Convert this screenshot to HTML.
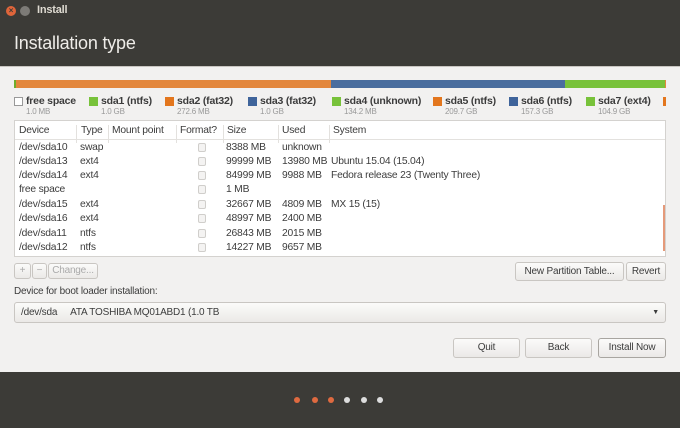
<!DOCTYPE html>
<html><head><meta charset="utf-8"><style>
*{margin:0;padding:0;box-sizing:border-box}
body{width:680px;height:428px;overflow:hidden;background:#f2f1f0;font-family:"Liberation Sans",sans-serif;font-size:10px;color:#3c3c3c;position:relative;letter-spacing:-0.2px}
.a{position:absolute}
.top{left:0;top:0;width:680px;height:66px;background:#3c3b37}
.bot{left:0;top:372px;width:680px;height:56px;background:#3c3b37}
.leg span{position:absolute}
.sq{width:9px;height:9px;top:97px}
.ln{top:95px;font-weight:bold;font-size:10.5px;color:#3c3c3c}
.sz{top:107px;font-size:8px;color:#999}
.tbl{left:14px;top:120px;width:652px;height:137px;background:#fff;border:1px solid #d4d2cf;font-size:10.3px}
.hd{left:0;top:0;width:650px;height:19px;border-bottom:1px solid #e3e1de}
.hd span{position:absolute;top:4px}
.sep{position:absolute;top:0;width:1px;height:18px;background:#e3e1de}
.r span{position:absolute}
.cb{width:8px;height:9px;border:1px solid #d0cecb;border-radius:2px;background:#f4f3f2}
.btn{position:absolute;border:1px solid #c9c6c2;border-radius:3px;background:linear-gradient(#fbfbfa,#ebe9e7);text-align:center;color:#3c3c3c}
.dot{position:absolute;top:397px;width:6px;height:6px;border-radius:50%}
</style></head><body>
<div class="a top"></div>
<div class="a" style="left:6px;top:6px;width:10px;height:10px;border-radius:50%;background:#e0653a;color:#3c3b37;font-size:8px;line-height:10px;text-align:center;font-weight:bold">×</div>
<div class="a" style="left:20px;top:6px;width:10px;height:10px;border-radius:50%;background:#7d7b77"></div>
<div class="a" style="left:37px;top:4px;color:#dfdbd2;font-weight:bold;font-size:11px">Install</div>
<div class="a" style="left:14px;top:33px;color:#eeece8;font-size:18px">Installation type</div>
<div class="a" style="left:0;top:66px;width:680px;height:1px;background:#c8c5c1"></div>

<div class="a" style="left:14px;top:80px;width:652px;height:8px;background:#e3873d"></div>
<div class="a" style="left:14px;top:80px;width:2px;height:8px;background:#6fae2c"></div>
<div class="a" style="left:331px;top:80px;width:234px;height:8px;background:#4a6d9e"></div>
<div class="a" style="left:565px;top:80px;width:100px;height:8px;background:#78c23a"></div>

<div class="leg">
<span class="sq" style="left:14px;border:1px solid #999;background:#fff"></span><span class="ln" style="left:26px">free space</span><span class="sz" style="left:26px">1.0 MB</span>
<span class="sq" style="left:89px;background:#78c23a"></span><span class="ln" style="left:101px">sda1 (ntfs)</span><span class="sz" style="left:101px">1.0 GB</span>
<span class="sq" style="left:165px;background:#e3761d"></span><span class="ln" style="left:177px">sda2 (fat32)</span><span class="sz" style="left:177px">272.6 MB</span>
<span class="sq" style="left:248px;background:#3f649b"></span><span class="ln" style="left:260px">sda3 (fat32)</span><span class="sz" style="left:260px">1.0 GB</span>
<span class="sq" style="left:332px;background:#78c23a"></span><span class="ln" style="left:344px">sda4 (unknown)</span><span class="sz" style="left:344px">134.2 MB</span>
<span class="sq" style="left:433px;background:#e3761d"></span><span class="ln" style="left:445px">sda5 (ntfs)</span><span class="sz" style="left:445px">209.7 GB</span>
<span class="sq" style="left:509px;background:#3f649b"></span><span class="ln" style="left:521px">sda6 (ntfs)</span><span class="sz" style="left:521px">157.3 GB</span>
<span class="sq" style="left:586px;background:#78c23a"></span><span class="ln" style="left:598px">sda7 (ext4)</span><span class="sz" style="left:598px">104.9 GB</span>
<span class="sq" style="left:663px;width:3px;background:#e3761d"></span>
</div>

<div class="a tbl">
<div class="a hd">
<span style="left:4px">Device</span><span class="sep" style="left:61px"></span>
<span style="left:66px">Type</span><span class="sep" style="left:93px"></span>
<span style="left:97px">Mount point</span><span class="sep" style="left:161px"></span>
<span style="left:165px">Format?</span><span class="sep" style="left:208px"></span>
<span style="left:212px">Size</span><span class="sep" style="left:263px"></span>
<span style="left:267px">Used</span><span class="sep" style="left:314px"></span>
<span style="left:318px">System</span>
</div>
<div class="a r" style="left:0;top:20px;width:650px">
<span style="left:4px;top:1px">/dev/sda10</span><span style="left:65px;top:1px">swap</span><span class="cb" style="left:183px;top:2px"></span><span style="left:211px;top:1px">8388 MB</span><span style="left:267px;top:1px">unknown</span>
<span style="left:4px;top:15px">/dev/sda13</span><span style="left:65px;top:15px">ext4</span><span class="cb" style="left:183px;top:16px"></span><span style="left:211px;top:15px">99999 MB</span><span style="left:267px;top:15px">13980 MB</span><span style="left:316px;top:15px">Ubuntu 15.04 (15.04)</span>
<span style="left:4px;top:29px">/dev/sda14</span><span style="left:65px;top:29px">ext4</span><span class="cb" style="left:183px;top:30px"></span><span style="left:211px;top:29px">84999 MB</span><span style="left:267px;top:29px">9988 MB</span><span style="left:316px;top:29px">Fedora release 23 (Twenty Three)</span>
<span style="left:4px;top:43px">free space</span><span class="cb" style="left:183px;top:44px"></span><span style="left:211px;top:43px">1 MB</span>
<span style="left:4px;top:58px">/dev/sda15</span><span style="left:65px;top:58px">ext4</span><span class="cb" style="left:183px;top:59px"></span><span style="left:211px;top:58px">32667 MB</span><span style="left:267px;top:58px">4809 MB</span><span style="left:316px;top:58px">MX 15 (15)</span>
<span style="left:4px;top:72px">/dev/sda16</span><span style="left:65px;top:72px">ext4</span><span class="cb" style="left:183px;top:73px"></span><span style="left:211px;top:72px">48997 MB</span><span style="left:267px;top:72px">2400 MB</span>
<span style="left:4px;top:87px">/dev/sda11</span><span style="left:65px;top:87px">ntfs</span><span class="cb" style="left:183px;top:88px"></span><span style="left:211px;top:87px">26843 MB</span><span style="left:267px;top:87px">2015 MB</span>
<span style="left:4px;top:101px">/dev/sda12</span><span style="left:65px;top:101px">ntfs</span><span class="cb" style="left:183px;top:102px"></span><span style="left:211px;top:101px">14227 MB</span><span style="left:267px;top:101px">9657 MB</span>
</div>
<div class="a" style="left:648px;top:84px;width:2px;height:46px;background:#e59a7a"></div>
</div>

<div class="btn" style="left:14px;top:263px;width:17px;height:16px;line-height:14px;color:#aaa">+</div>
<div class="btn" style="left:32px;top:263px;width:15px;height:16px;line-height:14px;color:#aaa">−</div>
<div class="btn" style="left:48px;top:263px;width:50px;height:16px;line-height:14px;color:#aaa">Change...</div>
<div class="btn" style="left:515px;top:262px;width:109px;height:19px;line-height:17px">New Partition Table...</div>
<div class="btn" style="left:626px;top:262px;width:40px;height:19px;line-height:17px">Revert</div>
<div class="a" style="left:14px;top:286px">Device for boot loader installation:</div>
<div class="btn" style="left:14px;top:302px;width:652px;height:21px;line-height:19px;text-align:left;padding-left:6px">/dev/sda&nbsp;&nbsp;&nbsp;&nbsp;&nbsp;ATA TOSHIBA MQ01ABD1 (1.0 TB<span style="position:absolute;right:6px;top:0;font-size:7px">▼</span></div>
<div class="btn" style="left:453px;top:338px;width:67px;height:20px;line-height:18px">Quit</div>
<div class="btn" style="left:525px;top:338px;width:67px;height:20px;line-height:18px">Back</div>
<div class="btn" style="left:598px;top:338px;width:68px;height:20px;line-height:18px;border-color:#a8a5a0">Install Now</div>

<div class="a bot"></div>
<div class="dot" style="left:294px;background:#df6a40"></div>
<div class="dot" style="left:312px;background:#df6a40"></div>
<div class="dot" style="left:328px;background:#df6a40"></div>
<div class="dot" style="left:344px;background:#ddd"></div>
<div class="dot" style="left:361px;background:#ddd"></div>
<div class="dot" style="left:377px;background:#ddd"></div>
</body></html>
